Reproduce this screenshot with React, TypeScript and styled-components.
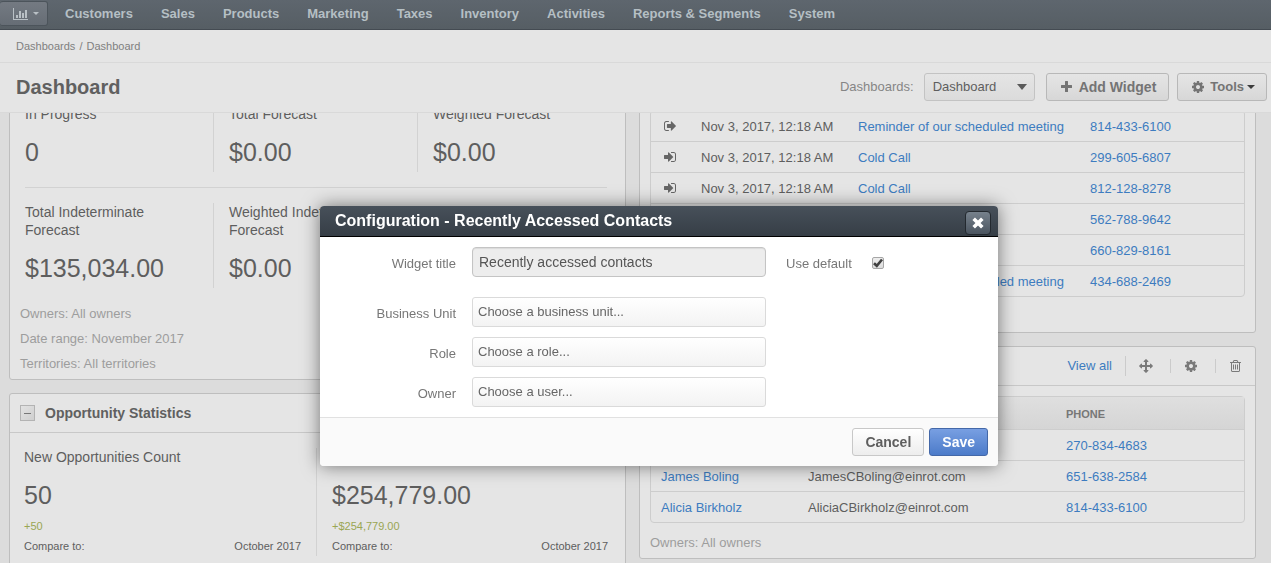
import React from "react";
import styled, { createGlobalStyle } from "styled-components";

const GlobalStyle = createGlobalStyle`
  * { box-sizing: border-box; }
  body {
    margin: 0;
    background: #dcdcdc;
    color: #5e5e5e;
    font: 13px/18px "Liberation Sans", Arial, sans-serif;
  }
  button, input, select { font-family: inherit; margin: 0; }
  svg { display: block; flex: none; }
`;

const blue = "#3d7cc0";
const line = "#cdcdcd";

/* ---------- icons ---------- */

type IconProps = { width: number; height: number };

const BarChartIcon = () => (
  <svg width="16" height="12" viewBox="0 0 16 12" fill="currentColor">
    <path d="M0 0h1v11h14v1H0zM3 7h2v3H3zM6 3h2v7H6zM9 5h2v5H9zM12 2h2v8h-2z" />
  </svg>
);

const CaretIcon = ({ width, height }: IconProps) => (
  <svg width={width} height={height} viewBox="0 0 10 5" preserveAspectRatio="none" fill="currentColor">
    <path d="M0 0h10L5 5z" />
  </svg>
);

const PlusIcon = () => (
  <svg width="11" height="11" viewBox="0 0 11 11" fill="currentColor">
    <path d="M4 .5a.5.5 0 0 1 .5-.5h2a.5.5 0 0 1 .5.5V4h3.500a.5.5 0 0 1 .5.5v2a.5.5 0 0 1-.5.5H7v3.500a.5.5 0 0 1-.5.5h-2a.5.5 0 0 1-.5-.5V7H.5a.5.5 0 0 1-.5-.5v-2A.5.5 0 0 1 .5 4H4z" />
  </svg>
);

const CloseIcon = () => (
  <svg width="12" height="12" viewBox="0 0 12 12" stroke="currentColor" strokeWidth="3.600">
    <path d="M1.700 1.700l8.600 8.600M10.300 1.700l-8.600 8.600" />
  </svg>
);

const GearIcon = ({ width, height }: IconProps) => (
  <svg width={width} height={height} viewBox="0 0 1536 1536" fill="currentColor">
    <path d="M1024 768q0-106-75-181t-181-75-181 75-75 181 75 181 181 75 181-75 75-181zm512-109v222q0 12-8 23t-20 13l-185 28q-19 54-39 91 35 50 107 138 10 12 10 25t-9 23q-27 37-99 108t-94 71q-12 0-26-9l-138-108q-44 23-91 38-16 136-29 186-7 28-36 28H657q-14 0-24.500-8.500T621 1506l-28-184q-49-16-90-37l-141 107q-10 9-25 9-14 0-25-11-126-114-165-168-7-10-7-23 0-12 8-23 15-21 51-66.500t54-70.500q-27-50-41-99L29 913q-13-2-21-12.500T0 877V655q0-12 8-23t19-13l186-28q14-46 39-92-40-57-107-138-10-12-10-24 0-10 9-23 26-36 98.500-107.500T337 135q13 0 26 10l138 107q44-23 91-38 16-136 29-186 7-28 36-28h222q14 0 24.500 8.500T915 30l28 184q49 16 90 37l142-107q9-9 24-9 13 0 25 10 129 119 165 170 7 8 7 22 0 12-8 23-15 21-51 66.500T1283 497q26 50 41 98l183 28q13 2 21 12.500t8 23.500z" />
  </svg>
);

const MoveIcon = () => (
  <svg width="14" height="14" viewBox="0 0 1792 1792" fill="currentColor">
    <path d="M1792 896q0 26-19 45l-256 256q-19 19-45 19t-45-19-19-45v-128h-384v384h128q26 0 45 19t19 45-19 45l-256 256q-19 19-45 19t-45-19l-256-256q-19-19-19-45t19-45 45-19h128v-384H384v128q0 26-19 45t-45 19-45-19L19 941Q0 922 0 896t19-45l256-256q19-19 45-19t45 19 19 45v128h384V384H640q-26 0-45-19t-19-45 19-45L851 19q19-19 45-19t45 19l256 256q19 19 19 45t-19 45-45 19h-128v384h384V640q0-26 19-45t45-19 45 19l256 256q19 19 19 45z" />
  </svg>
);

const TrashIcon = () => (
  <svg width="11" height="12" viewBox="0 192 1408 1536" fill="currentColor">
    <path d="M512 800v576q0 14-9 23t-23 9h-64q-14 0-23-9t-9-23V800q0-14 9-23t23-9h64q14 0 23 9t9 23zm256 0v576q0 14-9 23t-23 9h-64q-14 0-23-9t-9-23V800q0-14 9-23t23-9h64q14 0 23 9t9 23zm256 0v576q0 14-9 23t-23 9h-64q-14 0-23-9t-9-23V800q0-14 9-23t23-9h64q14 0 23 9t9 23zm128 724V576H256v948q0 22 7 40.500t14.500 27 10.500 8.500h832q3 0 10.500-8.500t14.500-27 7-40.500zM480 448h448l-48-117q-7-9-17-11H546q-10 2-17 11zm928 32v64q0 14-9 23t-23 9h-96v948q0 83-47 143.500t-113 60.500H288q-66 0-113-58.500T128 1528V576H32q-14 0-23-9t-9-23v-64q0-14 9-23t23-9h309l70-167q15-37 54-63t79-26h320q40 0 79 26t54 63l70 167h309q14 0 23 9t9 23z" />
  </svg>
);

const IncomingIcon = () => (
  <svg width="12" height="10" viewBox="0 256 1536 1280" fill="currentColor">
    <path d="M1184 896q0 26-19 45l-544 544q-19 19-45 19t-45-19-19-45v-288H64q-26 0-45-19T0 1088V704q0-26 19-45t45-19h448V352q0-26 19-45t45-19 45 19l544 544q19 19 19 45zm352-352v704q0 119-84.500 203.500T1248 1536H928q-13 0-22.500-9.500T896 1504q0-4-1-20t-.5-26.500 3-23.500 10-19.500 20.500-6.500h320q66 0 113-47t47-113V544q0-66-47-113t-113-47H936l-11.500-1-11.500-3-8-5.500-7-9-2-13.500q0-4-1-20t-.5-26.500 3-23.500 10-19.500T928 256h320q119 0 203.500 84.500T1536 544z" />
  </svg>
);

const OutgoingIcon = () => (
  <svg width="12" height="10" viewBox="0 256 1568 1280" fill="currentColor">
    <path d="M640 1440q0 4 1 20t.5 26.500-3 23.500-10 19.500-20.500 6.500H288q-119 0-203.500-84.500T0 1248V544q0-119 84.500-203.500T288 256h320q13 0 22.500 9.500T640 288q0 4 1 20t.5 26.500-3 23.500-10 19.500T608 384H288q-66 0-113 47t-47 113v704q0 66 47 113t113 47h312l11.500 1 11.500 3 8 5.500 7 9 2 13.500zm928-544q0 26-19 45l-544 544q-19 19-45 19t-45-19-19-45v-288H448q-26 0-45-19t-19-45V704q0-26 19-45t45-19h448V352q0-26 19-45t45-19 45 19l544 544q19 19 19 45z" />
  </svg>
);

const CheckIcon = () => (
  <svg width="10" height="10" viewBox="0 0 10 10" fill="none" stroke="#404040" strokeWidth="2.600">
    <path d="M1 5.200l2.800 2.600L9 1.500" />
  </svg>
);

/* ---------- page frame ---------- */

const Page = styled.div`
  display: flex;
  flex-direction: column;
  height: 100vh;
  overflow: hidden;
`;

const NavBar = styled.nav`
  display: flex;
  align-items: center;
  flex: none;
  height: 30px;
  padding-bottom: 2px;
  background: linear-gradient(#5e666e, #565e64);
  border-bottom: 1px solid #444b52;
`;

const AppMenuButton = styled.button`
  display: flex;
  align-items: center;
  gap: 4px;
  width: 48px;
  height: 25px;
  padding: 0 0 0 13px;
  border: 1px solid #4c545b;
  border-left: 0;
  border-radius: 3px;
  background: linear-gradient(#747a82, #666d75);
  color: #b9c0c5;
`;

const NavList = styled.ul`
  display: flex;
  gap: 28px;
  margin: 0;
  padding: 0 0 0 17px;
  list-style: none;
`;

const NavLink = styled.a`
  color: #b5bfc4;
  font-weight: bold;
  text-decoration: none;
  white-space: nowrap;
`;

const Breadcrumb = styled.div`
  flex: none;
  height: 33px;
  padding: 0 16px;
  background: #e5e5e5;
  border-bottom: 1px solid #d9d9d9;
  color: #808080;
  font-size: 11px;
  line-height: 32px;
  word-spacing: 1px;
`;

const CrumbLink = styled.a`
  color: inherit;
  text-decoration: none;
`;

const TitleBar = styled.header`
  display: flex;
  align-items: center;
  flex: none;
  height: 50px;
  padding: 0 4px 2px 16px;
  background: #e5e5e5;
  border-bottom: 1px solid #d9d9d9;
`;

const PageTitle = styled.h1`
  flex: 1;
  margin: 0;
  color: #606060;
  font-size: 20px;
  line-height: 24px;
`;

const SwitcherLabel = styled.label`
  margin-right: 10px;
  color: #858585;
`;

const SwitcherBox = styled.div`
  display: grid;
  grid-template-columns: 1fr 18px;
  align-items: center;
  width: 111px;
  margin-right: 11px;
  color: #5a5a5a;
  > * { grid-row: 1; }
  > svg { grid-column: 2; pointer-events: none; }
`;

const SwitcherSelect = styled.select`
  grid-column: 1 / 3;
  height: 28px;
  padding: 0 8px;
  appearance: none;
  border: 1px solid #c3c3c3;
  border-radius: 3px;
  background: linear-gradient(#e5e5e5, #dbdbdb);
  color: #5e5e5e;
  font-size: 13px;
`;

const ToolButton = styled.button<{ $compact?: boolean }>`
  display: flex;
  align-items: center;
  gap: ${(p) => (p.$compact ? 6 : 7)}px;
  height: 28px;
  margin-right: ${(p) => (p.$compact ? 0 : 8)}px;
  padding: 0 ${(p) => (p.$compact ? 11 : 12)}px 0 14px;
  border: 1px solid #b8b8b8;
  border-radius: 3px;
  background: linear-gradient(#e5e5e5, #d7d7d7);
  color: #747474;
  font-size: ${(p) => (p.$compact ? 13 : 14)}px;
  font-weight: bold;
  white-space: nowrap;
`;

const CaretSlot = styled.span`
  margin-left: -3px;
  color: #3c3c3c;
`;

/* ---------- widgets ---------- */

const Stage = styled.main`
  flex: 1;
  min-height: 0;
  overflow: hidden;
`;

const Columns = styled.div`
  display: grid;
  grid-template-columns: 1fr 1fr;
  gap: 13px;
  margin-top: -13px;
  padding: 0 15px 0 9px;
`;

const Column = styled.div`
  display: flex;
  flex-direction: column;
  gap: 13px;
  min-width: 0;
`;

const Widget = styled.section`
  background: #e5e5e5;
  border: 1px solid #bebebe;
  border-radius: 3px;
`;

const WidgetHeader = styled.div`
  display: flex;
  align-items: center;
  height: 39px;
  padding: 0 12px 0 10px;
  border-bottom: 1px solid #c8c8c8;
`;

const CollapseButton = styled.button`
  display: grid;
  place-items: center;
  width: 15px;
  height: 16px;
  margin-right: 10px;
  padding: 0;
  border: 1px solid #b3b3b3;
  background: linear-gradient(135deg, #e2e2e2, #cfcfcf);
  &::before {
    content: "";
    width: 7px;
    height: 1px;
    background: #777;
  }
`;

const WidgetTitle = styled.h2`
  flex: 1;
  margin: 0;
  color: #606060;
  font-size: 14px;
  line-height: 18px;
`;

const Actions = styled.div`
  display: flex;
  align-items: center;
`;

const ViewAll = styled.a`
  padding-right: 13px;
  border-right: 1px solid #cbcbcb;
  color: ${blue};
  line-height: 20px;
  text-decoration: none;
`;

const IconButton = styled.button`
  display: grid;
  place-items: center;
  width: 45px;
  height: 14px;
  padding: 0 4px 0 0;
  border: 0;
  border-right: 1px solid #cbcbcb;
  background: none;
  color: #7a7a7a;
  &:last-child {
    width: 27px;
    padding: 0 0 0 12px;
    border: 0;
  }
`;

const StatBlock = styled.div`
  padding: 4px 18px 0 15px;
`;

const StatRow = styled.div`
  display: grid;
  grid-template-columns: 189fr 204fr 189fr;
  & + & {
    margin-top: 15px;
    padding-top: 15px;
    border-top: 1px solid #d2d2d2;
  }
`;

const StatCell = styled.div`
  padding: 0 30px 5px 15px;
  border-right: 1px solid #d2d2d2;
  &:first-child { padding-left: 0; }
  &:last-child { border-right: 0; padding-right: 0; }
`;

const StatLabel = styled.div`
  color: #5e5e5e;
  font-size: 14px;
  line-height: 18px;
`;

const StatValue = styled.div`
  margin-top: 14px;
  color: #5e5e5e;
  font-size: 25px;
  line-height: 30px;
`;

const Notes = styled.div<{ $flush?: boolean }>`
  padding: ${(p) => (p.$flush ? "7px 0 3px" : "13px 10px 3px")};
  color: #9d9d9d;
  line-height: 25px;
`;

const CompareRow = styled.div`
  display: grid;
  grid-template-columns: 293fr 291fr;
  padding: 15px 17px 20px 14px;
`;

const CompareCell = styled.div`
  padding: 0 0 0 15px;
  &:first-child {
    padding: 0 15px 0 0;
    border-right: 1px solid #d2d2d2;
  }
`;

const Delta = styled.div`
  margin-top: 7px;
  color: #9aa653;
  font-size: 11px;
`;

const CompareTo = styled.div`
  display: flex;
  justify-content: space-between;
  margin-top: 2px;
  padding-bottom: 1px;
  font-size: 11px;
`;

const TableBody = styled.div`
  padding: 10px 10px 0;
`;

const CallsBody = styled(TableBody)`
  padding: 9px 10px 35px;
`;

const Grid = styled.table`
  width: 100%;
  table-layout: fixed;
  border: 1px solid ${line};
  border-radius: 4px;
  border-collapse: separate;
  border-spacing: 0;
`;

const HeadCell = styled.th<{ $width?: number }>`
  width: ${(p) => (p.$width ? p.$width + "px" : "auto")};
  height: 33px;
  padding: 2px 10px 0;
  border-bottom: 1px solid ${line};
  background: linear-gradient(#dfdfdf, #d5d5d5);
  color: #777;
  font-size: 11px;
  text-align: left;
  text-transform: uppercase;
`;

const Cell = styled.td`
  height: 31px;
  padding: 2px 0 0 10px;
  border-bottom: 1px solid ${line};
  white-space: nowrap;
  tr:last-child > & {
    height: 30px;
    border-bottom: 0;
  }
`;

const DirectionCell = styled(Cell)`
  padding: 0 0 0 13px;
  color: #666;
`;

const CellLink = styled.a`
  color: ${blue};
  text-decoration: none;
`;

/* ---------- dialog ---------- */

const DialogLayer = styled.div`
  position: fixed;
  inset: 0;
  display: flex;
  align-items: flex-start;
  justify-content: center;
  padding: 206px 0 0 47px;
`;

const Dialog = styled.div`
  width: 678px;
  max-width: 100%;
  overflow: hidden;
  border-radius: 4px;
  background: #fff;
  box-shadow: 0 0 18px rgba(0, 0, 0, 0.5);
`;

const DialogHeader = styled.div`
  display: flex;
  align-items: flex-start;
  justify-content: space-between;
  height: 31px;
  padding: 5px 7px 0 15px;
  border-bottom: 1px solid #000;
  background: linear-gradient(#47505a, #363e46);
`;

const DialogTitle = styled.h2`
  margin: 0;
  color: #fff;
  font-size: 16px;
  line-height: 20px;
`;

const CloseButton = styled.button`
  display: grid;
  place-items: center;
  width: 26px;
  height: 24px;
  padding: 0;
  border: 1px solid #23292f;
  border-radius: 4px;
  background: linear-gradient(#76818c, #4b5560);
  color: #fff;
`;

const Form = styled.form`
  display: flex;
  flex-direction: column;
  gap: 10px;
  padding: 10px;
`;

const FormRow = styled.div<{ $spaced?: boolean }>`
  display: flex;
  align-items: center;
  margin-bottom: ${(p) => (p.$spaced ? 10 : 0)}px;
`;

const FieldLabel = styled.label`
  width: 126px;
  margin-right: 16px;
  padding-top: 3px;
  color: #777;
  text-align: right;
`;

const TextField = styled.input`
  width: 294px;
  height: 30px;
  padding: 0 6px;
  border: 1px solid #c4c4c4;
  border-radius: 4px;
  background: #ededed;
  box-shadow: inset 0 1px 1px rgba(0, 0, 0, 0.08);
  color: #555;
  font-size: 14px;
`;

const SelectField = styled.select`
  width: 294px;
  height: 30px;
  padding: 0 5px 2px;
  appearance: none;
  border: 1px solid #dadada;
  border-radius: 3px;
  background: linear-gradient(#fff, #f3f3f3);
  color: #666;
  font-size: 13px;
`;

const InlineLabel = styled.label`
  margin: 0 20px;
  padding-top: 3px;
  color: #777;
`;

const CheckBoxWrap = styled.span`
  display: grid;
  place-items: center;
  margin-top: 2px;
  > * { grid-area: 1 / 1; }
  > svg { pointer-events: none; }
`;

const CheckBox = styled.input`
  width: 12px;
  height: 12px;
  appearance: none;
  border: 1px solid #a6a6a6;
  border-radius: 2px;
  background: linear-gradient(#ededed, #dcdcdc);
`;

const DialogFooter = styled.div`
  display: flex;
  justify-content: flex-end;
  gap: 5px;
  padding: 10px;
  border-top: 1px solid #e1e1e1;
  background: #fafafa;
`;

const DialogButton = styled.button<{ $primary?: boolean }>`
  height: 28px;
  padding: 0 12px;
  border: 1px solid ${(p) => (p.$primary ? "#4468a8" : "#c8c8c8")};
  border-radius: 3px;
  background: ${(p) =>
    p.$primary ? "linear-gradient(#789fe2, #4c7bc9)" : "linear-gradient(#fff, #ededed)"};
  color: ${(p) => (p.$primary ? "#fff" : "#5e5e5e")};
  font-size: 14px;
  font-weight: bold;
`;

/* ---------- data ---------- */

const menu = [
  "Customers", "Sales", "Products", "Marketing", "Taxes",
  "Inventory", "Activities", "Reports & Segments", "System",
];

const calls = [
  { outgoing: true, subject: "Reminder of our scheduled meeting", phone: "814-433-6100" },
  { outgoing: false, subject: "Cold Call", phone: "299-605-6807" },
  { outgoing: false, subject: "Cold Call", phone: "812-128-8278" },
  { outgoing: false, subject: "Cold Call", phone: "562-788-9642" },
  { outgoing: false, subject: "Cold Call", phone: "660-829-8161" },
  { outgoing: true, subject: "Reminder of our scheduled meeting", phone: "434-688-2469" },
];

const contacts = [
  { name: "", email: "", phone: "270-834-4683" },
  { name: "James Boling", email: "JamesCBoling@einrot.com", phone: "651-638-2584" },
  { name: "Alicia Birkholz", email: "AliciaCBirkholz@einrot.com", phone: "814-433-6100" },
];

const filters = [
  { id: "unit", label: "Business Unit", placeholder: "Choose a business unit..." },
  { id: "role", label: "Role", placeholder: "Choose a role..." },
  { id: "owner", label: "Owner", placeholder: "Choose a user..." },
];

const Stat = ({ label, value }: { label: string; value: string }) => (
  <StatCell>
    <StatLabel>{label}</StatLabel>
    <StatValue>{value}</StatValue>
  </StatCell>
);

const Comparison = ({ label, value, delta }: { label: string; value: string; delta: string }) => (
  <CompareCell>
    <StatLabel>{label}</StatLabel>
    <StatValue>{value}</StatValue>
    <Delta>{delta}</Delta>
    <CompareTo>
      <span>Compare to:</span>
      <span>October 2017</span>
    </CompareTo>
  </CompareCell>
);

export default function App() {
  return (
    <>
      <GlobalStyle />
      <Page>
        <NavBar>
          <AppMenuButton aria-label="Application menu">
            <BarChartIcon />
            <CaretIcon width={6} height={3} />
          </AppMenuButton>
          <NavList>
            {menu.map((item) => (
              <li key={item}>
                <NavLink href="#">{item}</NavLink>
              </li>
            ))}
          </NavList>
        </NavBar>
        <Breadcrumb>
          <CrumbLink href="#">Dashboards</CrumbLink> / <CrumbLink href="#">Dashboard</CrumbLink>
        </Breadcrumb>
        <TitleBar>
          <PageTitle>Dashboard</PageTitle>
          <SwitcherLabel htmlFor="dashboard">Dashboards:</SwitcherLabel>
          <SwitcherBox>
            <SwitcherSelect id="dashboard">
              <option>Dashboard</option>
            </SwitcherSelect>
            <CaretIcon width={10} height={6} />
          </SwitcherBox>
          <ToolButton>
            <PlusIcon />
            Add Widget
          </ToolButton>
          <ToolButton $compact>
            <GearIcon width={12} height={12} />
            Tools
            <CaretSlot>
              <CaretIcon width={8} height={4} />
            </CaretSlot>
          </ToolButton>
        </TitleBar>

        <Stage>
          <Columns>
            <Column>
              <Widget>
                <StatBlock>
                  <StatRow>
                    <Stat label="In Progress" value="0" />
                    <Stat label="Total Forecast" value="$0.00" />
                    <Stat label="Weighted Forecast" value="$0.00" />
                  </StatRow>
                  <StatRow>
                    <Stat label="Total Indeterminate Forecast" value="$135,034.00" />
                    <Stat label="Weighted Indeterminate Forecast" value="$0.00" />
                  </StatRow>
                </StatBlock>
                <Notes>
                  <div>Owners: All owners</div>
                  <div>Date range: November 2017</div>
                  <div>Territories: All territories</div>
                </Notes>
              </Widget>
              <Widget>
                <WidgetHeader>
                  <CollapseButton aria-label="Collapse" />
                  <WidgetTitle>Opportunity Statistics</WidgetTitle>
                </WidgetHeader>
                <CompareRow>
                  <Comparison label="New Opportunities Count" value="50" delta="+50" />
                  <Comparison label="New Opportunities Amount" value="$254,779.00" delta="+$254,779.00" />
                </CompareRow>
              </Widget>
            </Column>

            <Column>
              <Widget>
                <CallsBody>
                  <Grid>
                    <colgroup>
                      <col width="40" />
                      <col width="157" />
                      <col width="232" />
                      <col />
                    </colgroup>
                    <tbody>
                      {calls.map((call) => (
                        <tr key={call.phone}>
                          <DirectionCell>
                            {call.outgoing ? <OutgoingIcon /> : <IncomingIcon />}
                          </DirectionCell>
                          <Cell>Nov 3, 2017, 12:18 AM</Cell>
                          <Cell><CellLink href="#">{call.subject}</CellLink></Cell>
                          <Cell><CellLink href="#">{call.phone}</CellLink></Cell>
                        </tr>
                      ))}
                    </tbody>
                  </Grid>
                </CallsBody>
              </Widget>
              <Widget>
                <WidgetHeader>
                  <CollapseButton aria-label="Collapse" />
                  <WidgetTitle>Recently Accessed Contacts</WidgetTitle>
                  <Actions>
                    <ViewAll href="#">View all</ViewAll>
                    <IconButton aria-label="Move"><MoveIcon /></IconButton>
                    <IconButton aria-label="Configure"><GearIcon width={12} height={12} /></IconButton>
                    <IconButton aria-label="Delete"><TrashIcon /></IconButton>
                  </Actions>
                </WidgetHeader>
                <TableBody>
                  <Grid>
                    <thead>
                      <tr>
                        <HeadCell $width={147}>Contact</HeadCell>
                        <HeadCell $width={258}>Email</HeadCell>
                        <HeadCell>Phone</HeadCell>
                      </tr>
                    </thead>
                    <tbody>
                      {contacts.map((contact) => (
                        <tr key={contact.phone}>
                          <Cell><CellLink href="#">{contact.name}</CellLink></Cell>
                          <Cell>{contact.email}</Cell>
                          <Cell><CellLink href="#">{contact.phone}</CellLink></Cell>
                        </tr>
                      ))}
                    </tbody>
                  </Grid>
                  <Notes $flush>Owners: All owners</Notes>
                </TableBody>
              </Widget>
            </Column>
          </Columns>
        </Stage>
      </Page>

      <DialogLayer>
        <Dialog role="dialog" aria-labelledby="dialog-title">
          <DialogHeader>
            <DialogTitle id="dialog-title">Configuration - Recently Accessed Contacts</DialogTitle>
            <CloseButton aria-label="Close"><CloseIcon /></CloseButton>
          </DialogHeader>
          <Form>
            <FormRow $spaced>
              <FieldLabel htmlFor="title">Widget title</FieldLabel>
              <TextField id="title" defaultValue="Recently accessed contacts" readOnly />
              <InlineLabel htmlFor="use-default">Use default</InlineLabel>
              <CheckBoxWrap>
                <CheckBox id="use-default" type="checkbox" defaultChecked />
                <CheckIcon />
              </CheckBoxWrap>
            </FormRow>
            {filters.map((field) => (
              <FormRow key={field.id}>
                <FieldLabel htmlFor={field.id}>{field.label}</FieldLabel>
                <SelectField id={field.id}>
                  <option>{field.placeholder}</option>
                </SelectField>
              </FormRow>
            ))}
          </Form>
          <DialogFooter>
            <DialogButton>Cancel</DialogButton>
            <DialogButton $primary>Save</DialogButton>
          </DialogFooter>
        </Dialog>
      </DialogLayer>
    </>
  );
}
